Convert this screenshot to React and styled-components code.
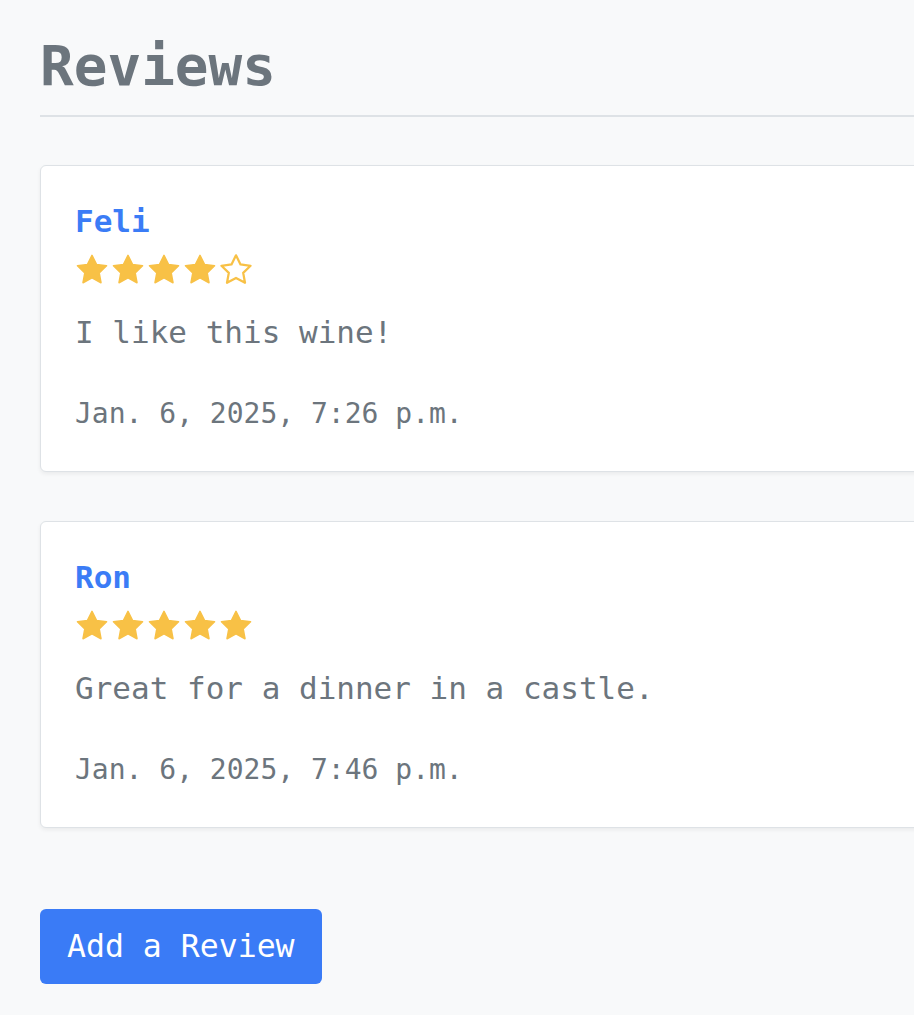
import styled, { createGlobalStyle } from "styled-components";

const GlobalStyle = createGlobalStyle`
  body {
    margin: 0;
    background: #f8f9fa;
    font-family: "DejaVu Sans Mono", "Liberation Mono", monospace;
    overflow-x: hidden;
  }
`;

const Page = styled.div`
  width: 1100px;
  padding: 30px 0 30px 40px;
`;

const Title = styled.h1`
  margin: 0;
  font-size: 56px;
  line-height: 72px;
  font-weight: 700;
  color: #6c757d;
  padding-bottom: 13px;
  border-bottom: 2px solid #dee2e6;
`;

const List = styled.div`
  display: flex;
  flex-direction: column;
  gap: 49px;
  margin-top: 48px;
`;

const Card = styled.div`
  background: #fff;
  border: 1.5px solid #dee2e6;
  border-radius: 6px;
  box-shadow: 0 2px 4px rgba(0, 0, 0, 0.06);
  padding: 34px 34px 37px;
  display: flex;
  flex-direction: column;
`;

const Name = styled.div`
  font-size: 31px;
  line-height: 42px;
  font-weight: 700;
  color: #3b7cf6;
`;

const Stars = styled.div`
  display: flex;
  margin-top: 10px;
  margin-left: -1px;
`;

const Comment = styled.p`
  margin: 22px 0 0;
  font-size: 31px;
  line-height: 44px;
  color: #6c757d;
`;

const Date = styled.div`
  margin-top: 40px;
  font-size: 28px;
  line-height: 40px;
  color: #6c757d;
`;

const Button = styled.button`
  align-self: flex-start;
  margin-top: 81px;
  background: #3a7bf6;
  color: #fff;
  border: none;
  border-radius: 6px;
  font-family: inherit;
  font-size: 31.5px;
  line-height: 44px;
  padding: 15px 27px 16px;
  cursor: pointer;
`;

const Star = ({ filled }) => (
  <svg width="36" height="36" viewBox="0 0 24 24">
    <path
      d="M12 2.2l3 6.1 6.7.9-4.9 4.7 1.2 6.6L12 17.3l-6 3.2 1.2-6.6-4.9-4.7 6.7-.9z"
      fill={filled ? "#f8c146" : "none"}
      stroke="#f8c146"
      strokeWidth={filled ? 1 : 1.5}
      strokeLinejoin="round"
    />
  </svg>
);

const reviews = [
  { name: "Feli", rating: 4, text: "I like this wine!", date: "Jan. 6, 2025, 7:26 p.m." },
  { name: "Ron", rating: 5, text: "Great for a dinner in a castle.", date: "Jan. 6, 2025, 7:46 p.m." },
];

export default function App() {
  return (
    <Page>
      <GlobalStyle />
      <Title>Reviews</Title>
      <List>
        {reviews.map((r) => (
          <Card key={r.name}>
            <Name>{r.name}</Name>
            <Stars>
              {[1, 2, 3, 4, 5].map((i) => (
                <Star key={i} filled={i <= r.rating} />
              ))}
            </Stars>
            <Comment>{r.text}</Comment>
            <Date>{r.date}</Date>
          </Card>
        ))}
      </List>
      <Button>Add a Review</Button>
    </Page>
  );
}
